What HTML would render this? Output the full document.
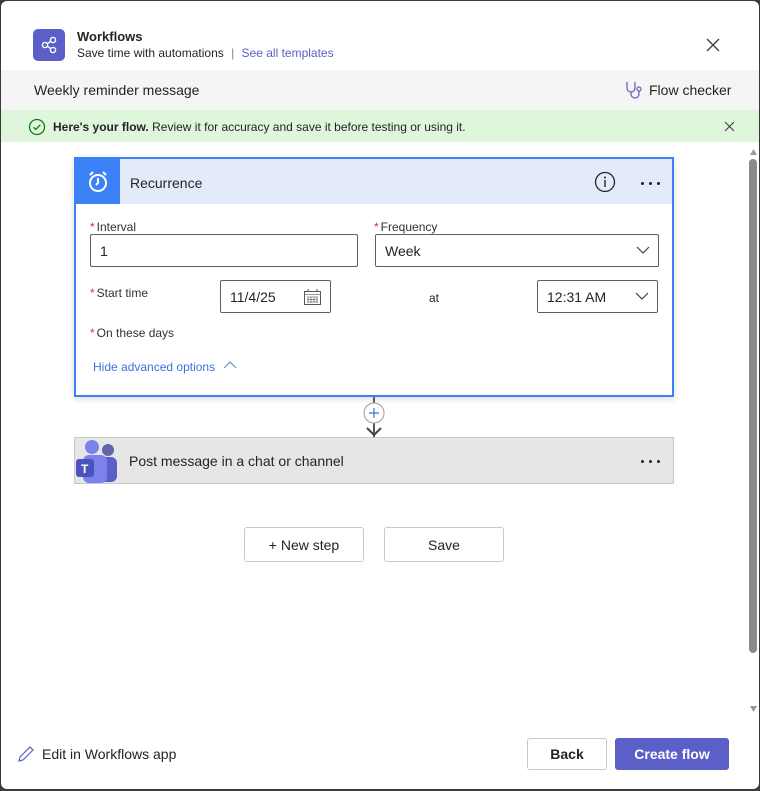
<!DOCTYPE html>
<html><head><style>
*{box-sizing:border-box;margin:0;padding:0}
body{width:760px;height:791px;background:#3a3a3a;font-family:"Liberation Sans",sans-serif;color:#242424;position:relative;overflow:hidden}
.dlg{position:absolute;left:1px;top:1px;width:758px;height:788px;background:#fff;border-radius:6px;overflow:hidden}
.a{position:absolute}
.lbl{font-size:12px;color:#323130}
.lbl b{color:#d13438;font-weight:normal;margin-right:2px}
.inp{position:absolute;border:1px solid #605e5c;border-radius:2px;background:#fff;font-size:14px;padding-left:9px;display:flex;align-items:center}
.btn{position:absolute;border:1px solid #c8c8c8;border-radius:3px;background:#fff;font-size:14px;display:flex;align-items:center;justify-content:center}
.dots{position:absolute;width:20px;height:4px}
.dots i{position:absolute;top:0;width:3px;height:3px;border-radius:50%;background:#242424}
</style></head><body>
<div class="dlg">
<div class="a" style="left:32px;top:28px;width:32px;height:32px;background:#5b5fc7;border-radius:5px">
<svg width="32" height="32" viewBox="0 0 32 32"><g fill="none" stroke="#fff" stroke-width="1.4"><circle cx="12" cy="16" r="2.6"/><circle cx="20" cy="11" r="2.6"/><circle cx="20" cy="21" r="2.6"/><path d="M14.3 14.7l3.4-2.3M14.3 17.3l3.4 2.3"/></g></svg></div>
<div class="a" style="left:76px;top:28px;font-size:13px;font-weight:bold">Workflows</div>
<div class="a" style="left:76px;top:45px;font-size:12px">Save time with automations <span style="color:#888;margin:0 4px">|</span> <span style="color:#5b5fc7">See all templates</span></div>
<svg class="a" style="left:705px;top:37px" width="14" height="14"><path d="M1 1l12 12M13 1L1 13" stroke="#424242" stroke-width="1.4"/></svg>
<div class="a" style="left:0;top:69px;width:758px;height:40px;background:#f5f5f5"></div>
<div class="a" style="left:33px;top:81px;font-size:14px">Weekly reminder message</div>
<svg class="a" style="left:622px;top:79px" width="22" height="20"><path d="M4 2v6a4 4 0 0 0 8 0V2M8 12v2a4 4 0 0 0 8 0v-3" fill="none" stroke="#7160c9" stroke-width="1.3"/><circle cx="16" cy="9" r="2" fill="none" stroke="#7160c9" stroke-width="1.3"/></svg>
<div class="a" style="left:648px;top:81px;font-size:14px">Flow checker</div>
<div class="a" style="left:0;top:109px;width:758px;height:32px;background:#dff6dd"></div>
<svg class="a" style="left:27px;top:117px" width="18" height="18"><circle cx="9" cy="9" r="7.5" fill="none" stroke="#107c10" stroke-width="1.3"/><path d="M5.5 9.2l2.3 2.3 4.5-4.7" fill="none" stroke="#107c10" stroke-width="1.3"/></svg>
<div class="a" style="left:52px;top:119px;font-size:12px"><b>Here's your flow.</b> Review it for accuracy and save it before testing or using it.</div>
<svg class="a" style="left:723px;top:120px" width="11" height="11"><path d="M1 1l9 9M10 1L1 10" stroke="#424242" stroke-width="1.1"/></svg>
<svg class="a" style="left:748px;top:147px" width="9" height="8"><path d="M1 7l3.5-6 3.5 6z" fill="#999"/></svg>
<div class="a" style="left:748px;top:158px;width:8px;height:494px;background:#8a8a8a;border-radius:4px"></div>
<svg class="a" style="left:748px;top:704px" width="9" height="8"><path d="M1 1l3.5 6 3.5-6z" fill="#999"/></svg>
<div class="a" style="left:73px;top:156px;width:600px;height:240px;border:2px solid #3c82f6;background:#fff;box-shadow:0 2px 6px rgba(0,0,0,.15)"></div>
<div class="a" style="left:75px;top:158px;width:596px;height:45px;background:#e3ebfb"></div>
<div class="a" style="left:75px;top:158px;width:44px;height:45px;background:#3c82f6">
<svg width="44" height="45"><circle cx="22" cy="24" r="8" fill="none" stroke="#fff" stroke-width="2"/><path d="M22 19v5l-2 2M14 16l3-3M30 16l-3-3" fill="none" stroke="#fff" stroke-width="2"/></svg></div>
<div class="a" style="left:129px;top:174px;font-size:14px">Recurrence</div>
<svg class="a" style="left:593px;top:170px" width="22" height="22"><circle cx="11" cy="11" r="9.5" fill="none" stroke="#242424" stroke-width="1.3"/><circle cx="11" cy="6.5" r="1" fill="#242424"/><path d="M11 9v7" stroke="#242424" stroke-width="1.4"/></svg>
<div class="dots" style="left:640px;top:181px"><i style="left:0"></i><i style="left:8px"></i><i style="left:16px"></i></div>
<div class="a lbl" style="left:89px;top:219px"><b>*</b>Interval</div>
<div class="inp" style="left:89px;top:233px;width:268px;height:33px">1</div>
<div class="a lbl" style="left:373px;top:219px"><b>*</b>Frequency</div>
<div class="inp" style="left:374px;top:233px;width:284px;height:33px">Week<svg style="position:absolute;right:8px;top:11px" width="14" height="9"><path d="M1 1l6 6 6-6" fill="none" stroke="#424242" stroke-width="1.2"/></svg></div>
<div class="a lbl" style="left:89px;top:285px"><b>*</b>Start time</div>
<div class="inp" style="left:219px;top:279px;width:111px;height:33px">11/4/25<svg style="position:absolute;right:9px;top:8px" width="17" height="16"><rect x=".5" y="2.5" width="16" height="13" fill="none" stroke="#555"/><path d="M.5 5.5h16M3 8h11M3 10.5h11M3 13h11M4 8v6M7 8v6M10 8v6M13 8v6" stroke="#777" stroke-width=".8"/><path d="M4 0v3M13 0v3" stroke="#555"/></svg></div>
<div class="a" style="left:428px;top:290px;font-size:12px">at</div>
<div class="inp" style="left:536px;top:279px;width:121px;height:33px">12:31 AM<svg style="position:absolute;right:8px;top:11px" width="14" height="9"><path d="M1 1l6 6 6-6" fill="none" stroke="#424242" stroke-width="1.2"/></svg></div>
<div class="a lbl" style="left:89px;top:325px"><b>*</b>On these days</div>
<div class="a" style="left:92px;top:359px;font-size:12px;color:#3c72e0">Hide advanced options</div>
<svg class="a" style="left:222px;top:360px" width="14" height="9"><path d="M1 7l6-6 6 6" fill="none" stroke="#6b8fd8" stroke-width="1.2"/></svg>
<div class="a" style="left:372px;top:396px;width:2px;height:40px;background:#555"></div>
<svg class="a" style="left:361px;top:400px" width="26" height="38"><circle cx="12" cy="12" r="10" fill="#fff" stroke="#aaa" stroke-width="1.2"/><path d="M12 7v10M7 12h10" stroke="#3c72e0" stroke-width="1.2"/><path d="M5 27l7 7 7-7" fill="none" stroke="#444" stroke-width="2"/></svg>
<div class="a" style="left:73px;top:436px;width:600px;height:47px;background:#e6e6e6;border:1px solid #c8c8c8"></div>
<svg class="a" style="left:74px;top:436px" width="44" height="46"><circle cx="17" cy="10" r="7" fill="#7b83eb"/><circle cx="33" cy="13" r="6" fill="#6264a7"/><rect x="25" y="20" width="17" height="25" rx="6" fill="#5b5fc7"/><rect x="8" y="18" width="24" height="28" rx="6" fill="#7b83eb"/><rect x="1" y="22" width="18" height="18" rx="3" fill="#4b53bc"/><text x="6" y="36" font-size="12" font-weight="bold" fill="#fff" font-family="Liberation Sans">T</text></svg>
<div class="a" style="left:128px;top:452px;font-size:14px">Post message in a chat or channel</div>
<div class="dots" style="left:640px;top:459px"><i style="left:0"></i><i style="left:8px"></i><i style="left:16px"></i></div>
<div class="btn" style="left:243px;top:526px;width:120px;height:35px">+ New step</div>
<div class="btn" style="left:383px;top:526px;width:120px;height:35px">Save</div>
<svg class="a" style="left:16px;top:744px" width="18" height="18"><path d="M2 16l1-4L13 2l3 3L6 15z" fill="none" stroke="#5b5fc7" stroke-width="1.2"/></svg>
<div class="a" style="left:41px;top:745px;font-size:14px">Edit in Workflows app</div>
<div class="btn" style="left:526px;top:737px;width:80px;height:32px;font-weight:bold">Back</div>
<div class="btn" style="left:614px;top:737px;width:114px;height:32px;background:#5b5fc7;border-color:#5b5fc7;color:#fff;font-weight:bold">Create flow</div>
</div>
</body></html>
